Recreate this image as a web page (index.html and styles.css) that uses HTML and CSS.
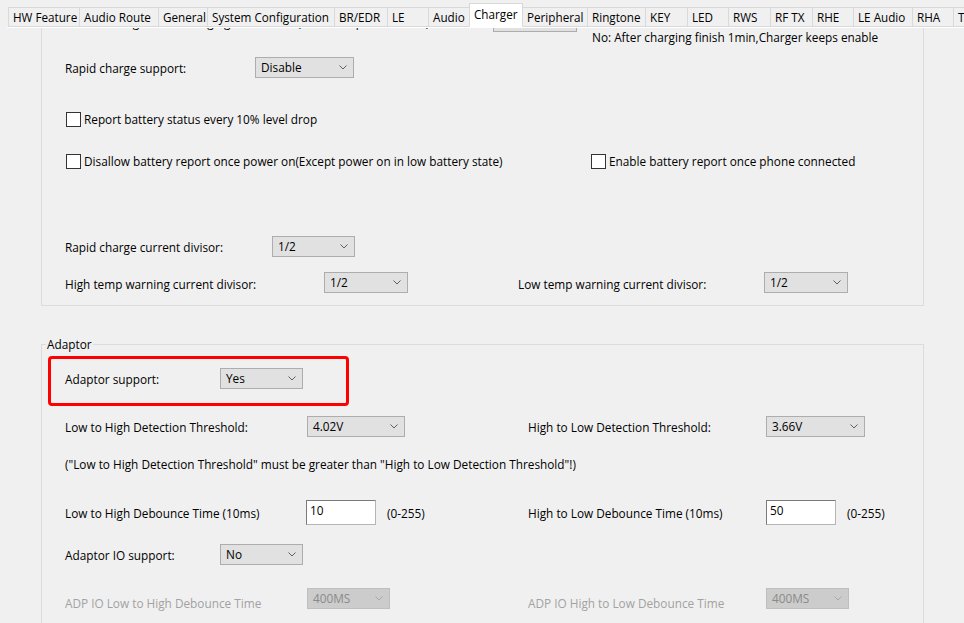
FILE: index.html
```html
<!DOCTYPE html>
<html>
<head>
<meta charset="utf-8">
<title>Charger</title>
<link rel="stylesheet" href="styles.css">
</head>
<body>
<div class="tabbar">
  <div class="tab tw71">HW Feature</div>
  <div class="tab tw79">Audio Route</div>
  <div class="tab tw49">General</div>
  <div class="tab tw127">System Configuration</div>
  <div class="tab tw53">BR/EDR</div>
  <div class="tab tw41">LE</div>
  <div class="tab tw41">Audio</div>
  <div class="tab tw54 active">Charger</div>
  <div class="tab tw64">Peripheral</div>
  <div class="tab tw58">Ringtone</div>
  <div class="tab tw42">KEY</div>
  <div class="tab tw41">LED</div>
  <div class="tab tw42">RWS</div>
  <div class="tab tw42">RF TX</div>
  <div class="tab tw41">RHE</div>
  <div class="tab tw59">LE Audio</div>
  <div class="tab tw41">RHA</div>
  <div class="tab tw41">TWS</div>
</div>

<div class="panel">
  <div class="sheet">
    <div class="group g1">
      <div class="row">
        <span class="lbl w428">Disable charger after charging finish 1 min(Allow low power mode)</span>
        <div class="combo w84"><span>No</span><svg class="chev" width="8" height="5" viewBox="0 0 8 5"><polyline points="0.5,0.5 4,4 7.5,0.5"/></svg></div>
        <div class="desc">No: After charging finish 1min,Charger keeps enable</div>
      </div>
      <div class="row">
        <span class="lbl w190">Rapid charge support:</span>
        <div class="combo w99"><span>Disable</span><svg class="chev" width="8" height="5" viewBox="0 0 8 5"><polyline points="0.5,0.5 4,4 7.5,0.5"/></svg></div>
      </div>
      <div class="row">
        <label class="cb-item first"><span class="check"></span><span>Report battery status every 10% level drop</span></label>
      </div>
      <div class="row">
        <label class="cb-item first w525"><span class="check"></span><span>Disallow battery report once power on(Except power on in low battery state)</span></label>
        <label class="cb-item"><span class="check"></span><span>Enable battery report once phone connected</span></label>
      </div>
      <div class="row">
        <span class="lbl w207">Rapid charge current divisor:</span>
        <div class="combo w83"><span>1/2</span><svg class="chev" width="8" height="5" viewBox="0 0 8 5"><polyline points="0.5,0.5 4,4 7.5,0.5"/></svg></div>
      </div>
      <div class="row">
        <div class="col w453">
          <span class="lbl w259 low">High temp warning current divisor:</span>
          <div class="combo w84"><span>1/2</span><svg class="chev" width="8" height="5" viewBox="0 0 8 5"><polyline points="0.5,0.5 4,4 7.5,0.5"/></svg></div>
        </div>
        <div class="col">
          <span class="lbl w246 low">Low temp warning current divisor:</span>
          <div class="combo w84"><span>1/2</span><svg class="chev" width="8" height="5" viewBox="0 0 8 5"><polyline points="0.5,0.5 4,4 7.5,0.5"/></svg></div>
        </div>
      </div>
    </div>

    <fieldset class="group g2">
      <legend>Adaptor</legend>
      <div class="g2-body">
        <div class="highlight">
          <div class="row">
            <span class="lbl w155">Adaptor support:</span>
            <div class="combo w83"><span>Yes</span><svg class="chev" width="8" height="5" viewBox="0 0 8 5"><polyline points="0.5,0.5 4,4 7.5,0.5"/></svg></div>
          </div>
        </div>
        <div class="row">
          <div class="col w463">
            <span class="lbl w242">Low to High Detection Threshold:</span>
            <div class="combo w98"><span>4.02V</span><svg class="chev" width="8" height="5" viewBox="0 0 8 5"><polyline points="0.5,0.5 4,4 7.5,0.5"/></svg></div>
          </div>
          <div class="col">
            <span class="lbl w238">High to Low Detection Threshold:</span>
            <div class="combo w99"><span>3.66V</span><svg class="chev" width="8" height="5" viewBox="0 0 8 5"><polyline points="0.5,0.5 4,4 7.5,0.5"/></svg></div>
          </div>
        </div>
        <div class="row">
          <span class="lbl">("Low to High Detection Threshold" must be greater than "High to Low Detection Threshold"!)</span>
        </div>
        <div class="row tall">
          <div class="col w463">
            <span class="lbl w241">Low to High Debounce Time (10ms)</span>
            <div class="edit">10</div>
            <span class="range">(0-255)</span>
          </div>
          <div class="col">
            <span class="lbl w238">High to Low Debounce Time (10ms)</span>
            <div class="edit">50</div>
            <span class="range">(0-255)</span>
          </div>
        </div>
        <div class="row">
          <span class="lbl w155">Adaptor IO support:</span>
          <div class="combo w83"><span>No</span><svg class="chev" width="8" height="5" viewBox="0 0 8 5"><polyline points="0.5,0.5 4,4 7.5,0.5"/></svg></div>
        </div>
        <div class="row">
          <div class="col w463">
            <span class="lbl w242 disabled">ADP IO Low to High Debounce Time</span>
            <div class="combo w83 off"><span>400MS</span><svg class="chev" width="8" height="5" viewBox="0 0 8 5"><polyline points="0.5,0.5 4,4 7.5,0.5"/></svg></div>
          </div>
          <div class="col">
            <span class="lbl w238 disabled">ADP IO High to Low Debounce Time</span>
            <div class="combo w83 off"><span>400MS</span><svg class="chev" width="8" height="5" viewBox="0 0 8 5"><polyline points="0.5,0.5 4,4 7.5,0.5"/></svg></div>
          </div>
        </div>
      </div>
    </fieldset>
  </div>
</div>
</body>
</html>
```

FILE: styles.css
```css
* { box-sizing: border-box; }
html, body { margin: 0; padding: 0; }
body {
  width: 964px;
  height: 623px;
  overflow: hidden;
  background: #f0f0f0;
  color: #000;
  font-family: "Open Sans", "Noto Sans", sans-serif;
  font-size: 11.8px;
  line-height: 15px;
}

/* ---------- tabs ---------- */
.tabbar {
  display: flex;
  align-items: flex-end;
  height: 27px;
  padding-left: 8px;
  white-space: nowrap;
  overflow: hidden;
}
.tab {
  flex: none;
  height: 20px;
  padding: 1px 0 0 4px;
  border-top: 1px solid #d9d9d9;
  border-left: 1px solid #d9d9d9;
  border-bottom: 1px solid #d9d9d9;
  background: #f0f0f0;
  font-size: 11.7px;
  line-height: 16px;
}
.tab.active {
  height: 24px;
  padding-top: 2px;
  background: #fff;
  border-right: 1px solid #d9d9d9;
  border-bottom: 1px solid #fff;
}
.tab.active + .tab { border-left: none; }
.tw41 { width: 41px; }
.tw42 { width: 42px; }
.tw49 { width: 49px; }
.tw53 { width: 53px; }
.tw54 { width: 54px; }
.tw58 { width: 58px; }
.tw59 { width: 59px; }
.tw64 { width: 64px; }
.tw71 { width: 71px; }
.tw79 { width: 79px; }
.tw127 { width: 127px; }

/* ---------- panel ---------- */
.panel {
  height: 596px;
  margin-left: 7px;
  border-top: 1px solid #fff;
  overflow: hidden;
}
.sheet {
  margin-top: -41px;
  padding-left: 34px;
}

.group {
  width: 883px;
  border: 1px solid #dcdcdc;
  margin: 0;
}
.g1 {
  display: grid;
  grid-template-rows: 46px 52px 42px 85px 36px 21px;
  padding: 23px 0 12px 23px;
}
.g2 {
  margin-top: 31px;
  padding: 4px 0 40px 0;
  min-width: 0;
}
.g2 legend {
  margin-left: 4px;
  padding: 0 1px;
  line-height: 15px;
}
.g2-body {
  display: grid;
  grid-template-rows: 60px 37px 47px 44px 44px 21px;
  padding-left: 23px;
}

.row {
  display: flex;
  align-items: center;
  height: 21px;
  align-self: start;
  white-space: nowrap;
}
.row.tall { height: 25px; }
.col { display: flex; align-items: center; height: 100%; }

.lbl { flex: none; padding-top: 2px; }
.lbl.low { padding-top: 4px; }
.lbl.disabled { color: #a2a2a2; padding-top: 10px; }

.w155 { width: 155px; }
.w190 { width: 190px; }
.w207 { width: 207px; }
.w238 { width: 238px; }
.w241 { width: 241px; }
.w242 { width: 242px; }
.w246 { width: 246px; }
.w259 { width: 259px; }
.w428 { width: 428px; }
.w453 { width: 453px; }
.w463 { width: 463px; }
.w525 { width: 525px; }
.w83 { width: 83px; }
.w84 { width: 84px; }
.w98 { width: 98px; }
.w99 { width: 99px; }

.desc {
  align-self: flex-start;
  margin: 19px 0 0 15px;
  line-height: 15px;
}

/* combo box */
.combo {
  flex: none;
  display: flex;
  align-items: center;
  justify-content: space-between;
  height: 21px;
  padding: 0 6px 0 5px;
  background: #e1e1e1;
  border: 1px solid #adadad;
}
.chev { flex: none; }
.chev polyline { fill: none; stroke: #606060; stroke-width: 1; }
.combo.off { background: #cccccc; border-color: #bfbfbf; color: #8a8a8a; }
.combo.off .chev polyline { stroke: #a8a8a8; }

/* edit box */
.edit {
  flex: none;
  width: 70px;
  height: 25px;
  padding: 2px 0 0 3px;
  background: #fff;
  border: 1px solid #7a7a7a;
  border-right-color: #b5b5b5;
  border-bottom-color: #b5b5b5;
}
.range { margin-left: 11px; padding-top: 2px; }

/* checkbox */
.cb-item { display: flex; align-items: center; flex: none; }
.cb-item.first { margin-left: 1px; }
.check {
  flex: none;
  width: 15px;
  height: 15px;
  margin-right: 3px;
  background: #fff;
  border: 1px solid #333;
}

/* annotation highlight */
.highlight {
  align-self: start;
  width: 301px;
  height: 50px;
  margin-left: -17px;
  padding: 9px 0 0 14px;
  border: 3px solid #ff0000;
  border-radius: 4px;
}
```
